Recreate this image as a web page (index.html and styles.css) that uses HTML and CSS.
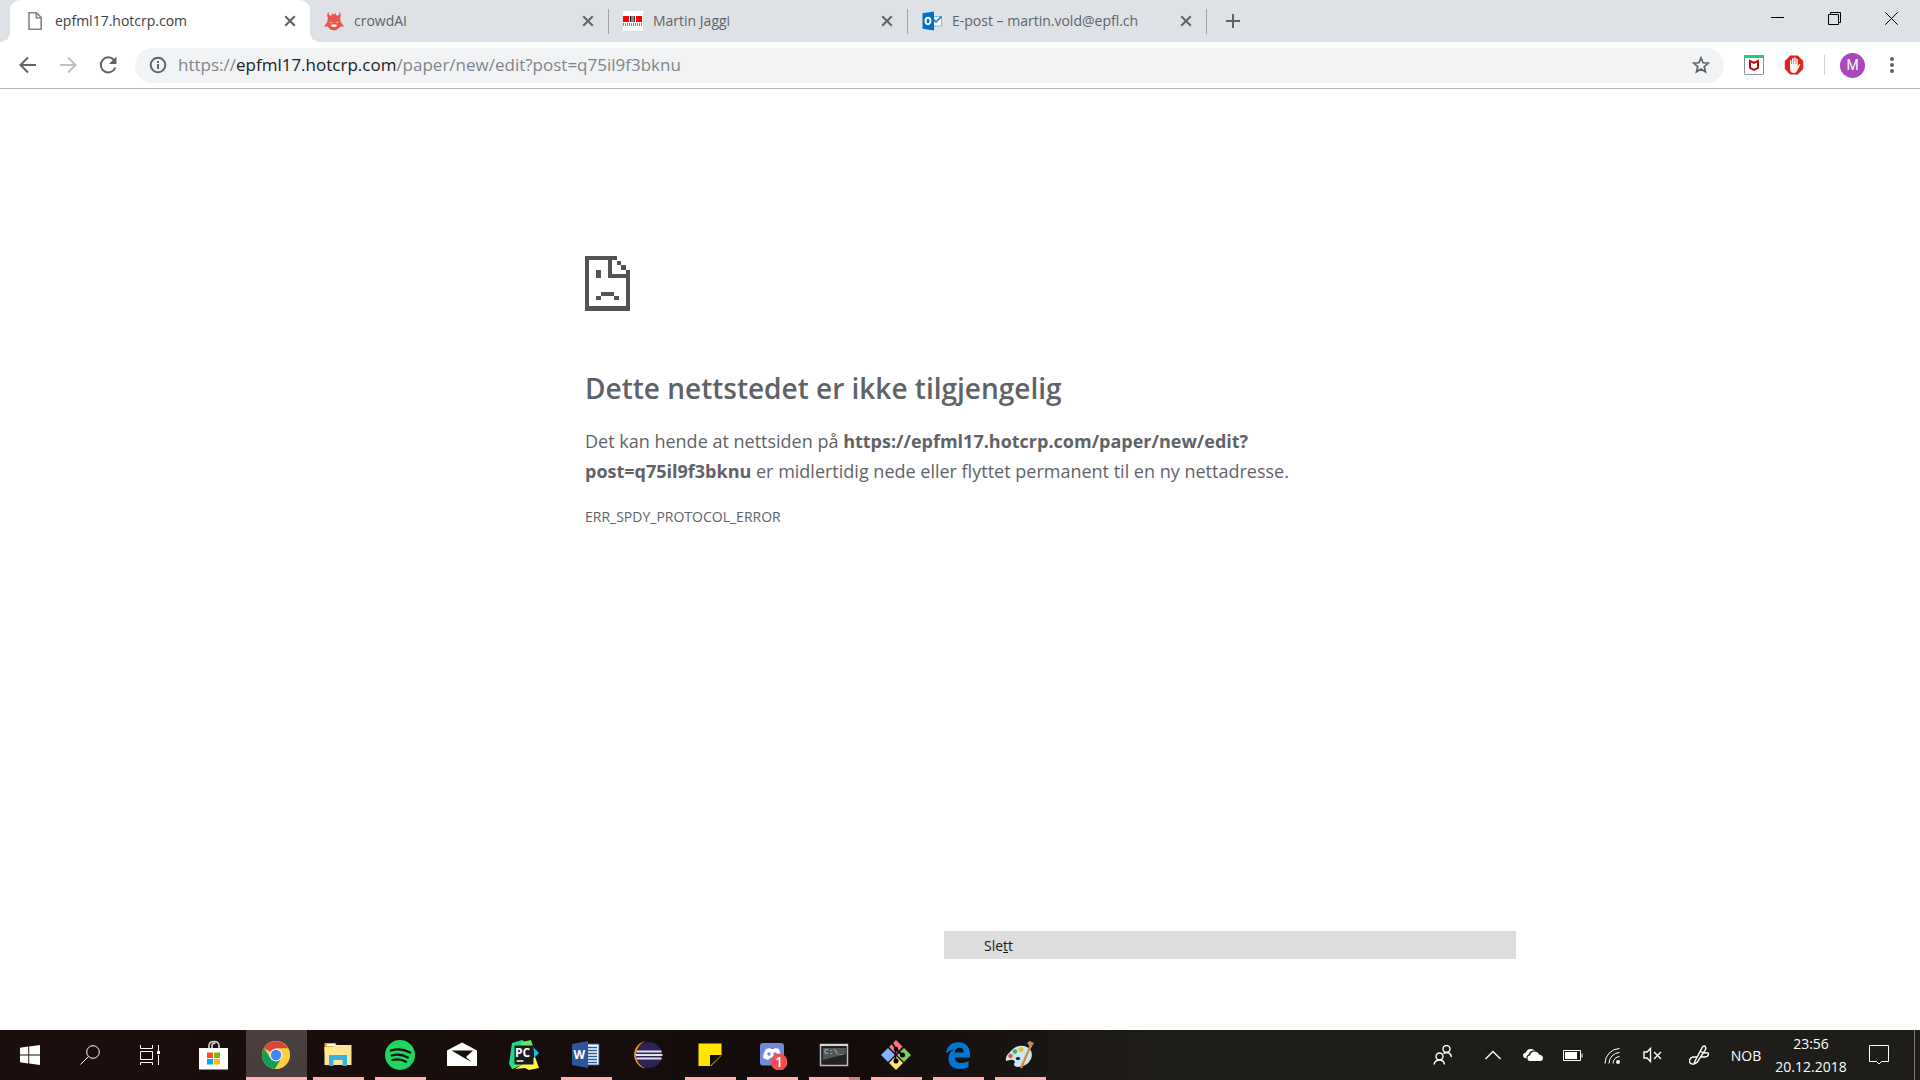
FILE: index.html
```html
<!DOCTYPE html>
<html lang="nb">
<head>
<meta charset="utf-8">
<title>epfml17.hotcrp.com</title>
<link rel="stylesheet" href="styles.css">
</head>
<body>
<header class="browser">
  <div class="tabstrip">
    <div class="tab tab-active">
      <svg class="favicon" viewBox="0 0 20 20"><path d="M4 1.8h7.5l4.7 4.7v11.7H4zM11.3 2v4.8H16" fill="none" stroke="#80868b" stroke-width="1.6"/></svg>
      <button class="tab-title">epfml17.hotcrp.com</button>
      <button class="tab-close" aria-label="Lukk fane"><svg viewBox="0 0 12 12"><path d="M1.2 1.2l9.6 9.6M10.8 1.2l-9.6 9.6"/></svg></button>
    </div>
    <div class="tab">
      <svg class="favicon" viewBox="0 0 20 20"><path d="M5 .8Q3.800 3.500 6.500 4.800L8 4V1.500l1 1.700h2l1-1.700V4l1.500.8Q16.200 3.500 15 .8q3.200 3 1 6l.8 4.200L20 15.500h-3.200L15 17l-2 1.800-3 .8-3-.8L5 17l-1.800-1.500H0L3.200 11 4 6.800q-2.200-3 1-6z" fill="#ef5350"/><path d="M5.500 10.500l3.500 1.300H6.500zM14.500 10.500L11 11.800h2.500zM6.500 14l3.500-.8 3.500.8-2 2h-3z" fill="#fff"/></svg>
      <button class="tab-title">crowdAI</button>
      <button class="tab-close" aria-label="Lukk fane"><svg viewBox="0 0 12 12"><path d="M1.2 1.2l9.6 9.6M10.8 1.2l-9.6 9.6"/></svg></button>
    </div>
    <div class="tab tab-ruled">
      <svg class="favicon" viewBox="0 0 20 20"><path fill="#fff" d="M0 0h20v20H0z"/><path fill="#f00" d="M0 5h6v6H0zM13 5h6v6h-6z"/><path fill="#111" d="M7 5h1.500v6H7zM9.500 5h1v6h-1zM11.200 5h.8v6h-.8z"/><path d="M0 13.500h19" stroke="#8a8a8a" stroke-width="3" stroke-dasharray="1 1"/></svg>
      <button class="tab-title">Martin Jaggi</button>
      <button class="tab-close" aria-label="Lukk fane"><svg viewBox="0 0 12 12"><path d="M1.2 1.2l9.6 9.6M10.8 1.2l-9.6 9.6"/></svg></button>
    </div>
    <div class="tab tab-ruled">
      <svg class="favicon" viewBox="0 0 20 20"><path d="M10 5.500h9.500v9.500H10z" fill="#fff" stroke="#6aa9de" stroke-width=".8"/><path d="M11 8l3 3 5.500-5.500" fill="none" stroke="#0072c6" stroke-width="1.500"/><path fill="#0072c6" d="M.5 2.300L12 .5v19L.5 17.700z"/><ellipse cx="6" cy="10" rx="2.500" ry="3.200" fill="none" stroke="#fff" stroke-width="1.900"/></svg>
      <button class="tab-title">E-post – martin.vold@epfl.ch</button>
      <button class="tab-close" aria-label="Lukk fane"><svg viewBox="0 0 12 12"><path d="M1.2 1.2l9.6 9.6M10.8 1.2l-9.6 9.6"/></svg></button>
    </div>
    <button class="new-tab" aria-label="Ny fane"><svg viewBox="0 0 16 16"><path d="M8 1v14M1 8h14"/></svg></button>
    <div class="window-controls">
      <button aria-label="Minimer"><svg viewBox="0 0 13 13"><path d="M0 5.500h13"/></svg></button>
      <button aria-label="Gjenopprett"><svg viewBox="0 0 13 13"><path d="M.5 2.500h10v10H.5zM2.500 2.500v-2h10v10h-2"/></svg></button>
      <button aria-label="Lukk"><svg viewBox="0 0 13 13"><path d="M.3.3l12.400 12.400M12.700.3L.3 12.700"/></svg></button>
    </div>
  </div>
  <div class="toolbar">
    <nav class="nav-buttons">
      <button aria-label="Tilbake"><svg viewBox="0 0 20 20"><path d="M18 10H3M10 2.500L2.500 10l7.500 7.500"/></svg></button>
      <button aria-label="Frem" disabled><svg viewBox="0 0 20 20"><path d="M2 10h15M10 2.500l7.500 7.500-7.500 7.500"/></svg></button>
      <button aria-label="Last inn på nytt"><svg viewBox="0 0 20 20"><path d="M16 5a7.500 7.500 0 1 0 1.300 7.500"/><path d="M18.500 1.500v7.500H11z" fill="#5f6368" stroke="none"/></svg></button>
    </nav>
    <div class="omnibox">
      <button aria-label="Nettstedsinformasjon"><svg viewBox="0 0 18 18"><circle cx="9" cy="9" r="7.300"/><path d="M9 8v5M9 5v2"/></svg></button>
      <div class="url" role="textbox" contenteditable="true" spellcheck="false" aria-label="Adresse">https://<span class="url-host">epfml17.hotcrp.com</span>/paper/new/edit?post=q75il9f3bknu</div>
      <button aria-label="Bokmerk"><svg viewBox="0 0 18 18"><path d="M9 1.800l2 5 5.300.4-4.100 3.500 1.300 5.200L9 13.100l-4.500 2.800 1.300-5.200-4.100-3.500L7 6.800z" stroke-width="1.700"/></svg></button>
    </div>
    <div class="extensions">
      <button aria-label="McAfee WebAdvisor"><svg viewBox="0 0 20 20"><rect x=".5" y=".5" width="19" height="19" rx="1" fill="#fff" stroke="#8a9096"/><path fill="#0ed67a" d="M0 0h20v3H0z"/><path d="M6 6l4 2 4-2v7l-4 2-4-2z" fill="none" stroke="#b01116" stroke-width="2"/></svg></button>
      <button aria-label="AdBlock"><svg viewBox="0 0 20 20"><path fill="#e2231a" d="M6.200.5h7.600l5.400 5.400v8.200l-5.400 5.400H6.200L.8 14.100V5.900z"/><path fill="#f5f5f5" d="M6 11V5.500q.8-1 1.500 0V9h.5V3.500q.8-1 1.600 0V9h.5V2.800q.8-1 1.600 0V9h.5V4q.8-1 1.600 0v7l1-1.500q1.200-1 1.500.3L14 14q-1.500 4-4 4-4 0-4-4z"/></svg></button>
    </div>
    <button class="profile">M</button>
    <button class="menu" aria-label="Meny"><svg viewBox="0 0 4 16"><circle cx="2" cy="2" r="2"/><circle cx="2" cy="8" r="2"/><circle cx="2" cy="14" r="2"/></svg></button>
  </div>
</header>

<main class="page">
  <section class="error">
    <svg class="error-icon" viewBox="0 0 45 55" shape-rendering="crispEdges"><path fill="#535353" d="M0 0h32v4H4v46h37V14h4v41H0zM23 4h4v14h14v4H23zM32 5h4v4h-4zM36 9h5v5h-5zM11 14h5v8h-5zM16 36h13v4H16zM11 40h5v4h-5zM29 40h5v4h-5z"/></svg>
    <h1>Dette nettstedet er ikke tilgjengelig</h1>
    <p class="error-text">Det kan hende at nettsiden på <strong>https://epfml17.hotcrp.com/paper/new/edit?<wbr>post=q75il9f3bknu</strong> er midlertidig nede eller flyttet permanent til en ny nettadresse.</p>
    <p class="error-code">ERR_SPDY_PROTOCOL_ERROR</p>
  </section>
  <button class="context-item">Sle<u>t</u>t</button>
</main>

<footer class="taskbar">
  <div class="system">
    <button aria-label="Start"><svg width="20" height="20" viewBox="0 0 20 20"><path fill="#fff" d="M0 2.800l8.300-1.200v8H0zM9.200 1.400L20 0v9.600H9.200zM0 10.500h8.300v8L0 17.300zM9.200 10.500H20V20L9.200 18.600z"/></svg></button>
    <button aria-label="Søk"><svg class="line" width="20" height="20" viewBox="0 0 20 20"><circle cx="13" cy="7" r="6.300"/><path d="M8.500 11.500L.5 19.500"/></svg></button>
    <button aria-label="Oppgavevisning"><svg class="line" width="20" height="20" viewBox="0 0 20 20"><path d="M.5 0v3.500h12V0M.5 6.500h12v8H.5zM.5 20v-2.500h12V20M18.500 0v6M18.500 10v10"/><path fill="#fff" stroke="none" d="M17 6h3v3h-3z"/></svg></button>
  </div>
  <div class="apps">
    <button aria-label="Microsoft Store"><svg viewBox="0 0 30 30"><path d="M10 9V6q0-4.500 5-4.500T20 6v3M13 9V6q0-3 3.500-3" fill="none" stroke="#ccc" stroke-width="1.700"/><path fill="#fff" d="M0 8h29v21.500H0z"/><path fill="#f25022" d="M8 12.500h6v5.500H8z"/><path fill="#7fba00" d="M15 12.500h6v5.500h-6z"/><path fill="#00a4ef" d="M8 19h6v5.500H8z"/><path fill="#ffb900" d="M15 19h6v5.500h-6z"/></svg></button>
    <button class="running current" aria-label="Google Chrome"><svg viewBox="0 0 30 30"><circle cx="15" cy="15" r="14" fill="#ffcd40"/><path fill="#db4437" d="M15 15L2.900 8A14 14 0 0 1 27.100 8.500H15z"/><path fill="#0f9d58" d="M2.900 8A14 14 0 0 0 14 29l6.600-10.500-5.600-3.500-5.500 3.200z"/><path fill="#ffcd40" d="M15 8.500h12.100A14 14 0 0 1 14 29l6.500-11z"/><circle cx="15" cy="15" r="6.500" fill="#f1f1f1"/><circle cx="15" cy="15" r="5.200" fill="#4285f4"/></svg></button>
    <button class="running" aria-label="Filutforsker"><svg viewBox="0 0 30 30"><path fill="#e8b02a" d="M1.500 3h11l1.500 3H28v6H1.500z"/><path fill="#fff" d="M4 4h8v2H4z"/><path fill="#ffe694" d="M1.500 7H10l2-2h16.500v20h-27z"/><path fill="#35b1e8" d="M6 15h18v11h-4.500v-6h-9v6H6z"/></svg></button>
    <button class="running" aria-label="Spotify"><svg viewBox="0 0 30 30"><circle cx="15" cy="15" r="15" fill="#1ed760"/><path d="M6 10.500q10-3 19 2M6.800 15.500q8.500-2.500 16 2M7.500 20q7-2 13.500 1.700" fill="none" stroke="#130d0c" stroke-width="2.300" stroke-linecap="round"/></svg></button>
    <button aria-label="E-post"><svg viewBox="0 0 30 30"><path fill="#fff" d="M15 2.500l15 8V26H0V10.500zM4.500 10.500l11 6.500 9 5-5.500-5 7-6.500z" fill-rule="evenodd"/></svg></button>
    <button aria-label="PyCharm"><svg viewBox="0 0 30 30"><path fill="#21d789" d="M3 3l10-3 5 3 1 18-16 8-3-5z"/><path fill="#62e85a" d="M13 2l9-2 3 9-6 13-16 7z"/><path fill="#07c3f2" d="M25 8l5 5-5 5z"/><path fill="#fcf84a" d="M26 17l4 11-10 2-4-2-10 1 8-5z"/><path fill="#1b1b1b" d="M5.500 5.500h19v19h-19z"/><text x="6" y="17" class="pc">PC</text><path stroke="#fff" stroke-width="1.500" d="M7.500 21h7"/></svg></button>
    <button class="running" aria-label="Word"><svg viewBox="0 0 30 30"><path fill="#fff" stroke="#2b579a" d="M15 4h13v21H15z"/><path d="M17 7.500h9M17 10.500h9M17 13.500h9M17 16.500h9M17 19.500h9M17 22.500h9" stroke="#2b579a" stroke-width="1.300"/><path fill="#2b579a" d="M1 4l16-3v27L1 25z"/><text x="2.500" y="19" class="word">W</text></svg></button>
    <button aria-label="Eclipse"><svg viewBox="0 0 30 30"><path fill="#f7941e" d="M12.500 1A14 14 0 0 0 12.500 28.500 15 15 0 0 1 12.500 1z"/><circle cx="16" cy="15" r="13" fill="#2c2255"/><path d="M3.500 11.500h25M3 15h26.500M3.500 18.500h25" stroke="#e4e2f0" stroke-width="2"/></svg></button>
    <button class="running" aria-label="Notater"><svg viewBox="0 0 30 30"><path fill="#ffe500" d="M3.500 3.500h23V15H15v11H3.500zM26.500 15v.5L16 26h-1z"/></svg></button>
    <button class="running" aria-label="Discord"><svg viewBox="0 0 30 30"><rect x="3" y="3" width="24" height="22.500" rx="3" fill="#7289da"/><path fill="#fff" d="M9 9l4-1 1 1h3l1-1 4 1q2 4 2 9l-4 2-1-2h-6l-2 2-5-2q0-5 3-9z"/><circle cx="12" cy="14" r="1.700" fill="#7289da"/><circle cx="18" cy="14" r="1.700" fill="#7289da"/><circle cx="22" cy="22" r="8.500" fill="#f04f52"/><text x="22" y="27" text-anchor="middle" class="count">1</text></svg></button>
    <button class="running stacked" aria-label="Ledetekst"><svg viewBox="0 0 30 30"><rect x="1.500" y="4.500" width="27" height="21" fill="#222" stroke="#b8bcc0" stroke-width="1.500"/><path fill="#d4d6d8" d="M1 4h28v2H1z"/><path fill="#555" d="M4 8h23v6L4 20z"/><text x="5" y="14" class="cmd">C:\_</text></svg></button>
    <button class="running" aria-label="Git"><svg viewBox="0 0 30 30"><path fill="#f8777b" d="M15 0l6.500 6.500L15 14 8 7z"/><path fill="#80b3ff" d="M7 8l7 7-7 7-7-7z"/><path fill="#82cf5b" d="M23 8l7 7-7 7-7-7z"/><path fill="#ffe171" d="M15 16l7 7-7 7-7-7z"/><path d="M11 3l3.500 5v13M15 9l6 6" stroke="#130f0e" stroke-width="1.800" fill="none"/><circle cx="15" cy="9" r="2.200"/><circle cx="15" cy="21" r="2.500"/><circle cx="21.500" cy="15" r="2.500"/></svg></button>
    <button class="running" aria-label="Edge"><svg viewBox="0 0 30 30"><path fill="#0078d7" d="M3 13.500C4 6 9 2.300 15.500 2.300 23 2.300 27 8 27 14v3.500H11.500c.3 4 3.500 5.500 7 5.500 2.500 0 5-.7 7-2v6c-2.500 1.300-5.500 1.900-8.500 1.900-7 0-11.500-4-11.500-10 0-4.500 2.500-8 6.500-9.900-4 .7-7 2.500-9 4.500zM11.500 12.500h9.300c0-3-1.300-4.700-4.300-4.700-2.700 0-4.600 2-5 4.700z"/></svg></button>
    <button class="running" aria-label="Paint"><svg viewBox="0 0 30 30"><path fill="#c9e6f5" d="M5 12Q12 3 22 7q7 4 4 12-4 8-14 8-5-1-2-5-1-3-5-2l-4 1q-1-5 4-9z"/><circle cx="5.500" cy="16" r="2.200" fill="#e8553f"/><circle cx="10" cy="11.500" r="2.300" fill="#4bb04f"/><circle cx="16" cy="9.500" r="2.500" fill="#f5b52e"/><ellipse cx="13" cy="18.500" rx="2.200" ry="1.500" fill="#1a1615"/><path d="M16 28L26 5" stroke="#e08a2e" stroke-width="2.300"/><path fill="#b98d5c" d="M22 3l3-2 4 2-3 5z"/></svg></button>
  </div>
  <div class="tray">
    <button class="people" aria-label="Personer"><svg class="line bold" width="20" height="20" viewBox="0 0 20 20"><circle cx="13.500" cy="4" r="3.500"/><path d="M18.500 12q-1-4.500-5-4.500-2 0-3 1.200"/><circle cx="6.500" cy="11.500" r="3.500"/><path d="M1 19.500q1-4.500 5.500-4.500t5 4.500"/></svg></button>
    <button aria-label="Vis skjulte ikoner"><svg class="line bold" width="20" height="20" viewBox="0 0 20 20"><path d="M2.500 14L10 6.500l7.500 7.500"/></svg></button>
    <button aria-label="OneDrive"><svg width="20" height="20" viewBox="0 0 20 20"><path fill="#fff" d="M3.500 13.500Q0 13 0 10.500T3 7.500Q4 4 7.500 4q2.500-.5 4 1.500-4.500-.5-6 4-2.500 1-2 4z"/><path fill="#fff" d="M7 16q-2.500 0-2.500-2.700T7 10.500Q8 6.500 11.500 6.500t4.500 3q4 .5 4 3.500t-3 3z"/></svg></button>
    <button aria-label="Batteri"><svg class="line" width="20" height="20" viewBox="0 0 20 20"><path d="M.5 5.500h17v10H.5zM19 8.500v4"/><path fill="#fff" stroke="none" d="M2 7h12v7H2z"/></svg></button>
    <button aria-label="Wi-Fi"><svg class="line" width="20" height="20" viewBox="0 0 20 20"><path d="M2 18.500A15 15 0 0 1 16.500 3.500M6 18.500A11 11 0 0 1 16.500 7.500M10 18.500a7 7 0 0 1 6.500-7"/><circle cx="15" cy="17" r="2" fill="#fff" stroke="none"/></svg></button>
    <button aria-label="Lyd av"><svg class="line bold" width="20" height="20" viewBox="0 0 20 20"><path d="M1 7h3l3.500-3.500v13L4 13H1zM11 7l7 7M18 7l-7 7"/></svg></button>
    <button class="pen" aria-label="Windows Ink"><svg class="line bold" width="20" height="20" viewBox="0 0 20 20"><path d="M6 16L13.500 2q2-2 3 0t-1 4L8 17.500 5 19zM11 6l3 2M8 12H4q-3.500 1-3.500 4T4 19M15 8q5-1 4.500 1.500T16 12H12"/></svg></button>
    <button class="lang">NOB</button>
    <button class="clock"><time>23:56</time><time>20.12.2018</time></button>
    <button class="notices" aria-label="Varslinger"><svg class="line" width="20" height="20" viewBox="0 0 20 20"><path d="M.5.500h19v16h-7l-2.500 2.500L7.500 16.500h-7z"/></svg></button>
    <button class="show-desktop" aria-label="Vis skrivebord"></button>
  </div>
</footer>
</body>
</html>
```
FILE: styles.css
```css
* { box-sizing: border-box; }

body {
  margin: 0;
  min-height: 100vh;
  display: flex;
  flex-direction: column;
  background: #fff;
  color: #5f6368;
  font-family: "Open Sans", "Noto Sans", sans-serif;
}

button {
  display: flex;
  align-items: center;
  justify-content: center;
  margin: 0;
  padding: 0;
  border: 0;
  background: none;
  color: inherit;
  font: inherit;
}

svg { display: block; flex: none; }

/* Tab strip */
.tabstrip {
  display: flex;
  height: 42px;
  padding-left: 10px;
  background: #dee1e6;
}

.tab {
  position: relative;
  display: flex;
  align-items: center;
  flex: 0 1 299px;
  min-width: 0;
  padding: 0 11px 0 14px;
  gap: 10px;
  font-size: 14px;
}

.tab-active {
  padding: 0 10px 0 15px;
  border-radius: 10px 10px 0 0;
  background: #fff;
  color: #3c4043;
  flex-basis: 300px;
}

.tab-active::before,
.tab-active::after {
  content: "";
  position: absolute;
  bottom: 0;
  width: 10px;
  height: 10px;
}

.tab-active::before {
  right: 100%;
  background: radial-gradient(circle at 0 0, transparent 10px, #fff 10px);
}

.tab-active::after {
  left: 100%;
  background: radial-gradient(circle at 100% 0, transparent 10px, #fff 10px);
}

.tab-ruled::before,
.tab-ruled:nth-child(4)::after {
  content: "";
  position: absolute;
  left: -1px;
  width: 1px;
  height: 25px;
  background: #a0a4a9;
}

.tab-ruled:nth-child(4)::after { left: calc(100% - 1px); }

.favicon { width: 20px; height: 20px; }

.tab-title {
  flex: 1;
  min-width: 0;
  justify-content: flex-start;
  padding-bottom: 2px;
  overflow: hidden;
  white-space: nowrap;
}

.tab-close { width: 20px; height: 20px; }

.tab-close svg {
  width: 12px;
  height: 12px;
  stroke: #5f6368;
  stroke-width: 2;
}

.new-tab { width: 34px; margin-left: 9px; }

.new-tab svg {
  width: 16px;
  height: 16px;
  stroke: #5f6368;
  stroke-width: 2;
}

.window-controls { display: flex; margin-left: auto; }

.window-controls button { width: 57px; height: 37px; }

.window-controls svg {
  width: 13px;
  height: 13px;
  fill: none;
  stroke: #000;
}

/* Address row */
.toolbar {
  display: flex;
  align-items: center;
  height: 47px;
  padding: 0 16px 0 8px;
  border-bottom: 1px solid #b6b8ba;
}

.nav-buttons { display: flex; margin-right: 7px; }

.nav-buttons button { width: 40px; height: 35px; }

.nav-buttons svg {
  width: 20px;
  height: 20px;
  fill: none;
  stroke: #5f6368;
  stroke-width: 2;
}

.nav-buttons button:disabled svg { stroke: #bdc1c6; }

.omnibox {
  display: flex;
  align-items: center;
  flex: 1;
  height: 35px;
  padding: 0 14px;
  gap: 11px;
  border-radius: 18px;
  background: #f1f3f4;
}

.omnibox svg {
  width: 18px;
  height: 18px;
  fill: none;
  stroke: #5f6368;
  stroke-width: 2;
}

.url {
  flex: 1;
  color: #80868b;
  font-size: 17px;
  line-height: 24px;
  white-space: nowrap;
}

.url-host { color: #202124; }

.extensions {
  display: flex;
  gap: 20px;
  margin-left: 20px;
  padding-right: 20px;
  border-right: 1px solid #ced0d3;
}

.extensions svg { width: 20px; height: 20px; }

.profile {
  width: 25px;
  height: 25px;
  margin: 0 15px;
  border-radius: 50%;
  background: #ab47bc;
  color: #fff;
  font-family: Roboto, sans-serif;
  font-size: 14px;
}

.menu { width: 24px; height: 24px; }

.menu svg { width: 4px; height: 16px; fill: #5f6368; }

/* Error page */
.page {
  position: relative;
  flex: 1;
}

.error {
  max-width: 750px;
  margin: 0 auto;
  padding-top: 167px;
}

.error-icon { width: 45px; height: 55px; }

.error h1 {
  margin: 56px 0 0;
  font-size: 28px;
  font-weight: 600;
  line-height: 42px;
}

.error-text {
  margin: 17px 0 0;
  font-size: 18px;
  line-height: 30px;
}

.error-code {
  margin: 21px 0 0;
  font-size: 14px;
  line-height: 20px;
}

.context-item {
  position: absolute;
  left: 944px;
  bottom: 71px;
  width: 572px;
  height: 28px;
  justify-content: flex-start;
  padding-left: 40px;
  background: #dedede;
  color: #1a1a1a;
  font-size: 14px;
}

/* Taskbar */
.taskbar {
  display: flex;
  height: 50px;
  background: linear-gradient(90deg, #1c0e0c, #130c0b 45%, #1e1c19 60%, #1e1d1a);
  color: #fff;
}

.system, .apps, .tray { display: flex; }

.system { margin-right: 3px; }

.system button { width: 60px; }

.line { fill: none; stroke: #fff; stroke-width: 1; }

.bold { stroke-width: 1.4; }

.apps button { position: relative; width: 62px; }

.apps svg { width: 30px; height: 30px; }

.running::after {
  content: "";
  position: absolute;
  bottom: 0;
  left: 6px;
  right: 5px;
  height: 3px;
  background: #ffb3b1;
}

.stacked::after {
  background: linear-gradient(90deg, #ffb3b1 40px, #c98583 40px);
}

.current {
  background: linear-gradient(#4b403f, #463c3b) right / 61px 100% no-repeat;
}

.current::after { left: 1px; right: 0; }

.pc { fill: #fff; font: 700 12px "Open Sans", sans-serif; }
.word { fill: #fff; font: 700 12px "Open Sans", sans-serif; }
.count { fill: #fff; font: 600 14px "Open Sans", sans-serif; }
.cmd { fill: #ccc; font: 8px "Liberation Mono", monospace; }

.tray { margin-left: auto; font-size: 14px; }

.tray button { width: 40px; }

.tray .people { margin-right: 10px; }

.tray .pen { width: 44px; margin-left: 4px; }

.tray .lang { width: 50px; }

.tray .clock {
  flex-direction: column;
  width: 80px;
  line-height: 23px;
}

.tray .notices { width: 56px; margin-right: 7px; }

.tray .show-desktop { width: 6px; border-left: 1px solid #77736f; }
```
